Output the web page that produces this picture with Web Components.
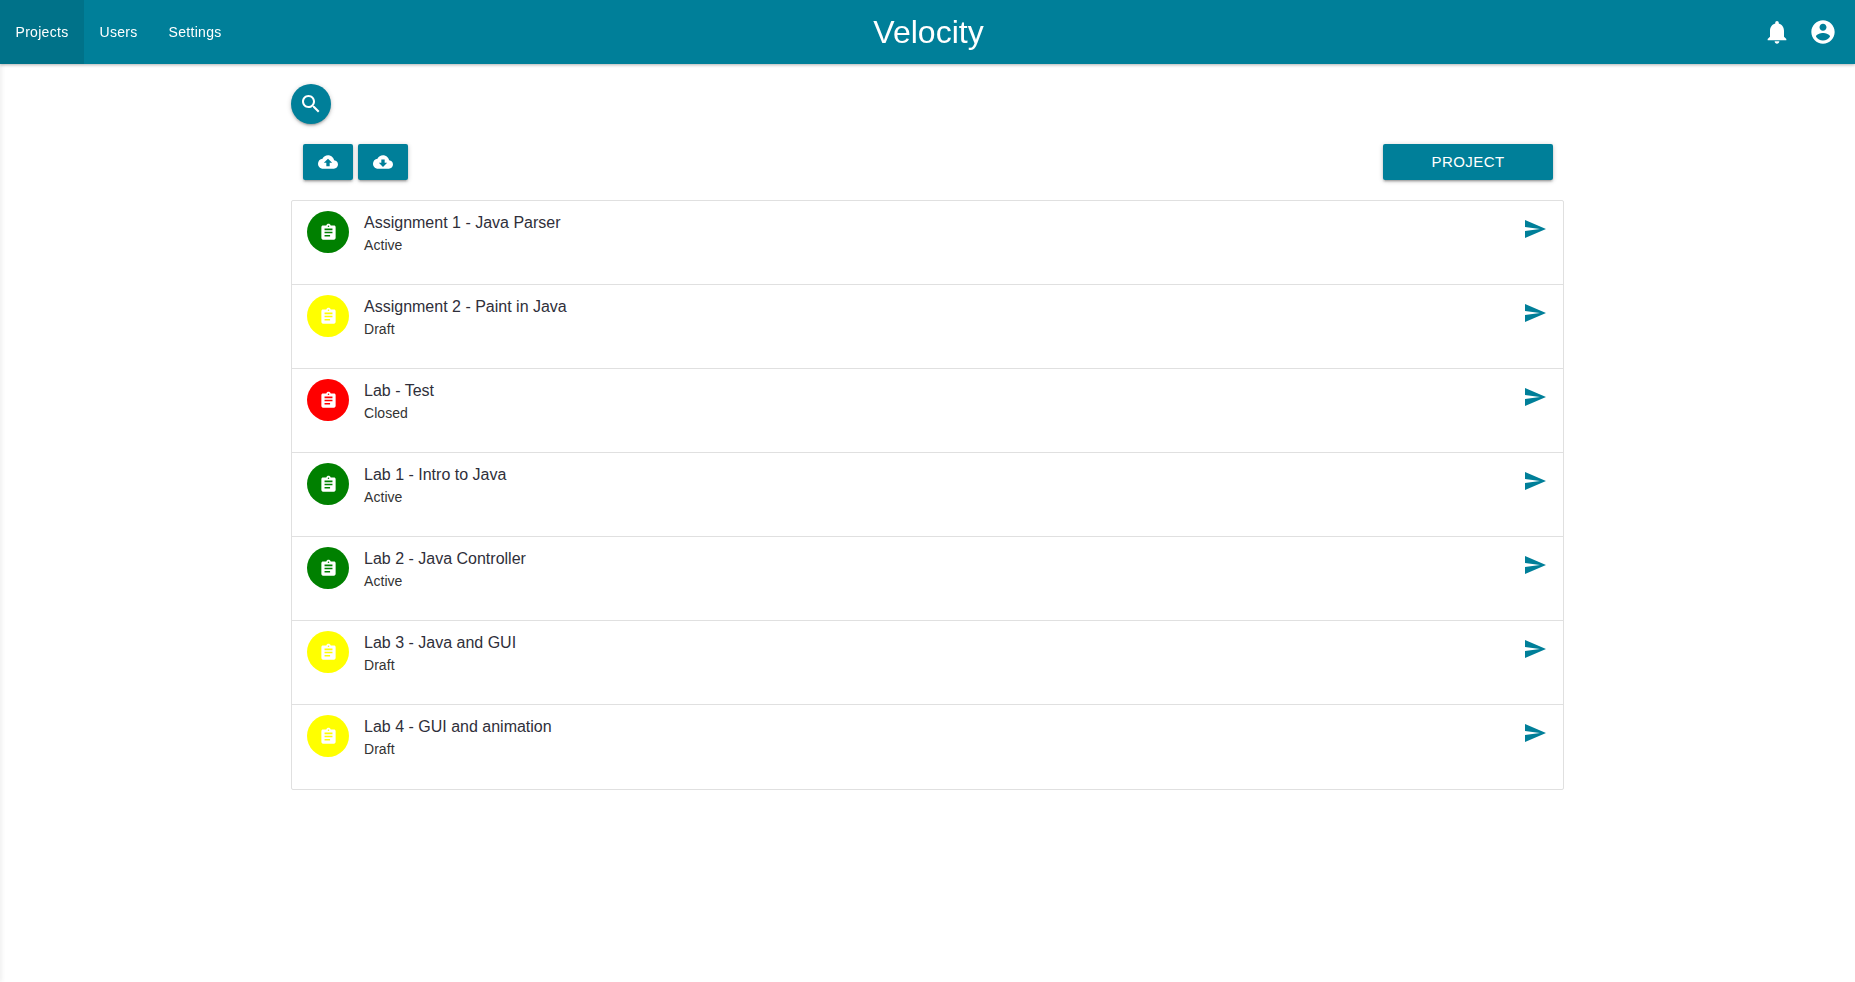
<!DOCTYPE html>
<html lang="en">
<head>
<meta charset="utf-8">
<title>Velocity</title>
<style>
    html, body { margin: 0; height: 100%; background: #fff; font-family: "Liberation Sans", Arial, sans-serif; }
</style>
</head>
<body>
<velocity-app></velocity-app>
<script>
// material icon paths, all on a 24x24 box
const ICONS = {
    search: 'M15.5 14h-.79l-.28-.27C15.41 12.59 16 11.11 16 9.5 16 5.91 13.09 3 9.5 3S3 5.91 3 9.5 5.91 16 9.5 16c1.61 0 3.09-.59 4.23-1.57l.27.28v.79l5 4.99L20.49 19l-4.99-5zm-6 0C7.01 14 5 11.99 5 9.5S7.01 5 9.5 5 14 7.01 14 9.5 11.99 14 9.5 14z',
    upload: 'M19.35 10.04C18.67 6.59 15.64 4 12 4 9.11 4 6.6 5.64 5.35 8.04 2.34 8.36 0 10.91 0 14c0 3.31 2.69 6 6 6h13c2.76 0 5-2.24 5-5 0-2.64-2.05-4.78-4.65-4.96zM14 13v4h-4v-4H7l5-5 5 5h-3z',
    download: 'M19.35 10.04C18.67 6.59 15.64 4 12 4 9.11 4 6.6 5.64 5.35 8.04 2.34 8.36 0 10.91 0 14c0 3.31 2.69 6 6 6h13c2.76 0 5-2.24 5-5 0-2.64-2.05-4.78-4.65-4.96zM17 13l-5 5-5-5h3V9h4v4h3z',
    bell: 'M12 22c1.1 0 2-.9 2-2h-4c0 1.1.89 2 2 2zm6-6v-5c0-3.07-1.64-5.64-4.5-6.32V4c0-.83-.67-1.5-1.5-1.5s-1.5.67-1.5 1.5v.68C7.63 5.36 6 7.92 6 11v5l-2 2v1h16v-1l-2-2z',
    account: 'M12 2C6.48 2 2 6.48 2 12s4.48 10 10 10 10-4.48 10-10S17.52 2 12 2zm0 3c1.66 0 3 1.34 3 3s-1.34 3-3 3-3-1.34-3-3 1.34-3 3-3zm0 14.2c-2.5 0-4.71-1.28-6-3.22.03-1.99 4-3.08 6-3.08 1.99 0 5.97 1.09 6 3.08-1.29 1.94-3.5 3.22-6 3.22z',
    assignment: 'M19 3h-4.18C14.4 1.84 13.3 1 12 1c-1.3 0-2.4.84-2.82 2H5c-1.1 0-2 .9-2 2v14c0 1.1.9 2 2 2h14c1.1 0 2-.9 2-2V5c0-1.1-.9-2-2-2zm-7 0c.55 0 1 .45 1 1s-.45 1-1 1-1-.45-1-1 .45-1 1-1zm2 14H7v-2h7v2zm3-4H7v-2h10v2zm0-4H7V7h10v2z',
    send: 'M2.01 21L23 12 2.01 3 2 10l15 2-15 2z'
};

const PROJECTS = [
    ['Assignment 1 - Java Parser', 'Active'],
    ['Assignment 2 - Paint in Java', 'Draft'],
    ['Lab - Test', 'Closed'],
    ['Lab 1 - Intro to Java', 'Active'],
    ['Lab 2 - Java Controller', 'Active'],
    ['Lab 3 - Java and GUI', 'Draft'],
    ['Lab 4 - GUI and animation', 'Draft']
];

const STATUS_COLOURS = { Active: '#008000', Draft: '#ffff00', Closed: '#ff0000' };

/**
 * A material icon. Attributes: name, size. Takes its colour from the parent.
 */
class MatIcon extends HTMLElement {
    connectedCallback() {
        const size = this.getAttribute('size') || 24;
        this.attachShadow({ mode: 'open' });
        this.shadowRoot.innerHTML = `
            <style>
                :host { display: inline-flex; flex: none; }
                svg { display: block; fill: currentColor; }
            </style>
            <svg width="${size}" height="${size}" viewBox="0 0 24 24"><path d="${ICONS[this.getAttribute('name')]}"/></svg>
        `;
    }
}
customElements.define('mat-icon', MatIcon);

/**
 * Teal raised button. Set the round attribute for the floating search button.
 */
class RaisedButton extends HTMLElement {
    constructor() {
        super();
        this.attachShadow({ mode: 'open' });
        this.shadowRoot.innerHTML = `
            <style>
                :host {
                    display: inline-flex;
                    justify-content: center;
                    align-items: center;
                    box-sizing: border-box;
                    height: 36px;
                    width: 50px;
                    flex: none;
                    border-radius: 2px;
                    background: var(--teal);
                    color: #fff;
                    font-size: 15px;
                    letter-spacing: 0.43px;
                    box-shadow: 0 1px 5px rgba(0,0,0,.2), 0 2px 2px rgba(0,0,0,.14), 0 3px 1px -2px rgba(0,0,0,.12);
                }
                :host([round]) {
                    width: 40px;
                    height: 40px;
                    border-radius: 50%;
                }
                :host([wide]) { width: 170px; padding-bottom: 2px; }
            </style>
            <slot></slot>
        `;
    }
}
customElements.define('raised-button', RaisedButton);

/**
 * The top bar: tabs on the left, the title in the middle, icons on the right.
 */
class AppBar extends HTMLElement {
    constructor() {
        super();
        this.attachShadow({ mode: 'open' });
        this.shadowRoot.innerHTML = `
            <style>
                :host {
                    display: grid;
                    grid-template-columns: 1fr auto 1fr;
                    align-items: center;
                    height: 64px;
                    background: var(--teal);
                    color: #fff;
                    box-shadow: 0 1px 3px rgba(0,0,0,.3);
                    position: relative;
                    z-index: 1;
                }
                nav { display: flex; height: 100%; font-size: 14px; letter-spacing: 0.3px; }
                nav a { display: flex; align-items: center; padding: 0 15.5px; }
                nav a.active { background: rgba(0,0,0,.1); }
                h1 { margin: 0; padding-left: 2px; font-size: 32px; font-weight: 400; line-height: 64px; }
                .actions { display: flex; justify-content: flex-end; align-items: center; gap: 18px; padding-right: 18px; }
            </style>
            <nav>
                <a class="active">Projects</a>
                <a>Users</a>
                <a>Settings</a>
            </nav>
            <h1>Velocity</h1>
            <div class="actions">
                <mat-icon name="bell" size="28"></mat-icon>
                <mat-icon name="account" size="28"></mat-icon>
            </div>
        `;
    }
}
customElements.define('app-bar', AppBar);

/**
 * One row of the project list: status avatar, name and status, send icon.
 */
class ProjectRow extends HTMLElement {
    connectedCallback() {
        const status = this.getAttribute('status');
        this.attachShadow({ mode: 'open' });
        this.shadowRoot.innerHTML = `
            <style>
                :host {
                    display: flex;
                    box-sizing: border-box;
                    height: 84px;
                    padding: 10px 16px 0 15px;
                    border-bottom: 1px solid #e0e0e0;
                }
                :host(:last-child) { border-bottom: none; }
                .avatar {
                    display: flex;
                    justify-content: center;
                    align-items: center;
                    width: 42px;
                    height: 42px;
                    flex: none;
                    border-radius: 50%;
                    background: ${STATUS_COLOURS[status]};
                    color: #fff;
                }
                .text { flex: 1; margin-left: 15px; }
                .name { font-size: 16px; line-height: 24px; color: #2f2f3a; }
                .status { font-size: 14px; line-height: 20px; letter-spacing: 0.05px; color: #333; }
                .send { color: var(--teal); margin-top: 6px; }
            </style>
            <div class="avatar"><mat-icon name="assignment" size="19"></mat-icon></div>
            <div class="text">
                <div class="name"><slot></slot></div>
                <div class="status">${status}</div>
            </div>
            <mat-icon class="send" name="send"></mat-icon>
        `;
    }
}
customElements.define('project-row', ProjectRow);

/**
 * Bordered box around the project rows.
 */
class ProjectList extends HTMLElement {
    constructor() {
        super();
        this.attachShadow({ mode: 'open' });
        this.shadowRoot.innerHTML = `
            <style>
                :host {
                    display: block;
                    border: 1px solid #e0e0e0;
                    border-radius: 2px;
                }
            </style>
            <slot></slot>
        `;
    }
}
customElements.define('project-list', ProjectList);

/**
 * The whole page.
 */
class VelocityApp extends HTMLElement {
    constructor() {
        super();
        this.attachShadow({ mode: 'open' });
        const rows = PROJECTS.map(([name, status]) => `<project-row status="${status}">${name}</project-row>`).join('');
        this.shadowRoot.innerHTML = `
            <style>
                :host {
                    --teal: #007f99;
                    display: block;
                    font-family: "Liberation Sans", Arial, sans-serif;
                }
                /* closed drawer just off the left edge, only its shadow shows */
                .drawer {
                    position: fixed;
                    top: 0;
                    bottom: 0;
                    left: -1px;
                    width: 1px;
                    box-shadow: 0 0 5px rgba(0,0,0,.3);
                }
                main { width: 1273px; margin: 0 auto; padding-top: 20px; }
                .toolbar { display: flex; align-items: center; gap: 5px; margin-top: 20px; padding: 0 11px 0 12px; }
                .spacer { flex: 1; }
                project-list { margin-top: 20px; }
            </style>
            <div class="drawer"></div>
            <app-bar></app-bar>
            <main>
                <raised-button round><mat-icon name="search"></mat-icon></raised-button>
                <div class="toolbar">
                    <raised-button><mat-icon name="upload" size="20"></mat-icon></raised-button>
                    <raised-button><mat-icon name="download" size="20"></mat-icon></raised-button>
                    <div class="spacer"></div>
                    <raised-button wide>PROJECT</raised-button>
                </div>
                <project-list>${rows}</project-list>
            </main>
        `;
    }
}
customElements.define('velocity-app', VelocityApp);
</script>
</body>
</html>
